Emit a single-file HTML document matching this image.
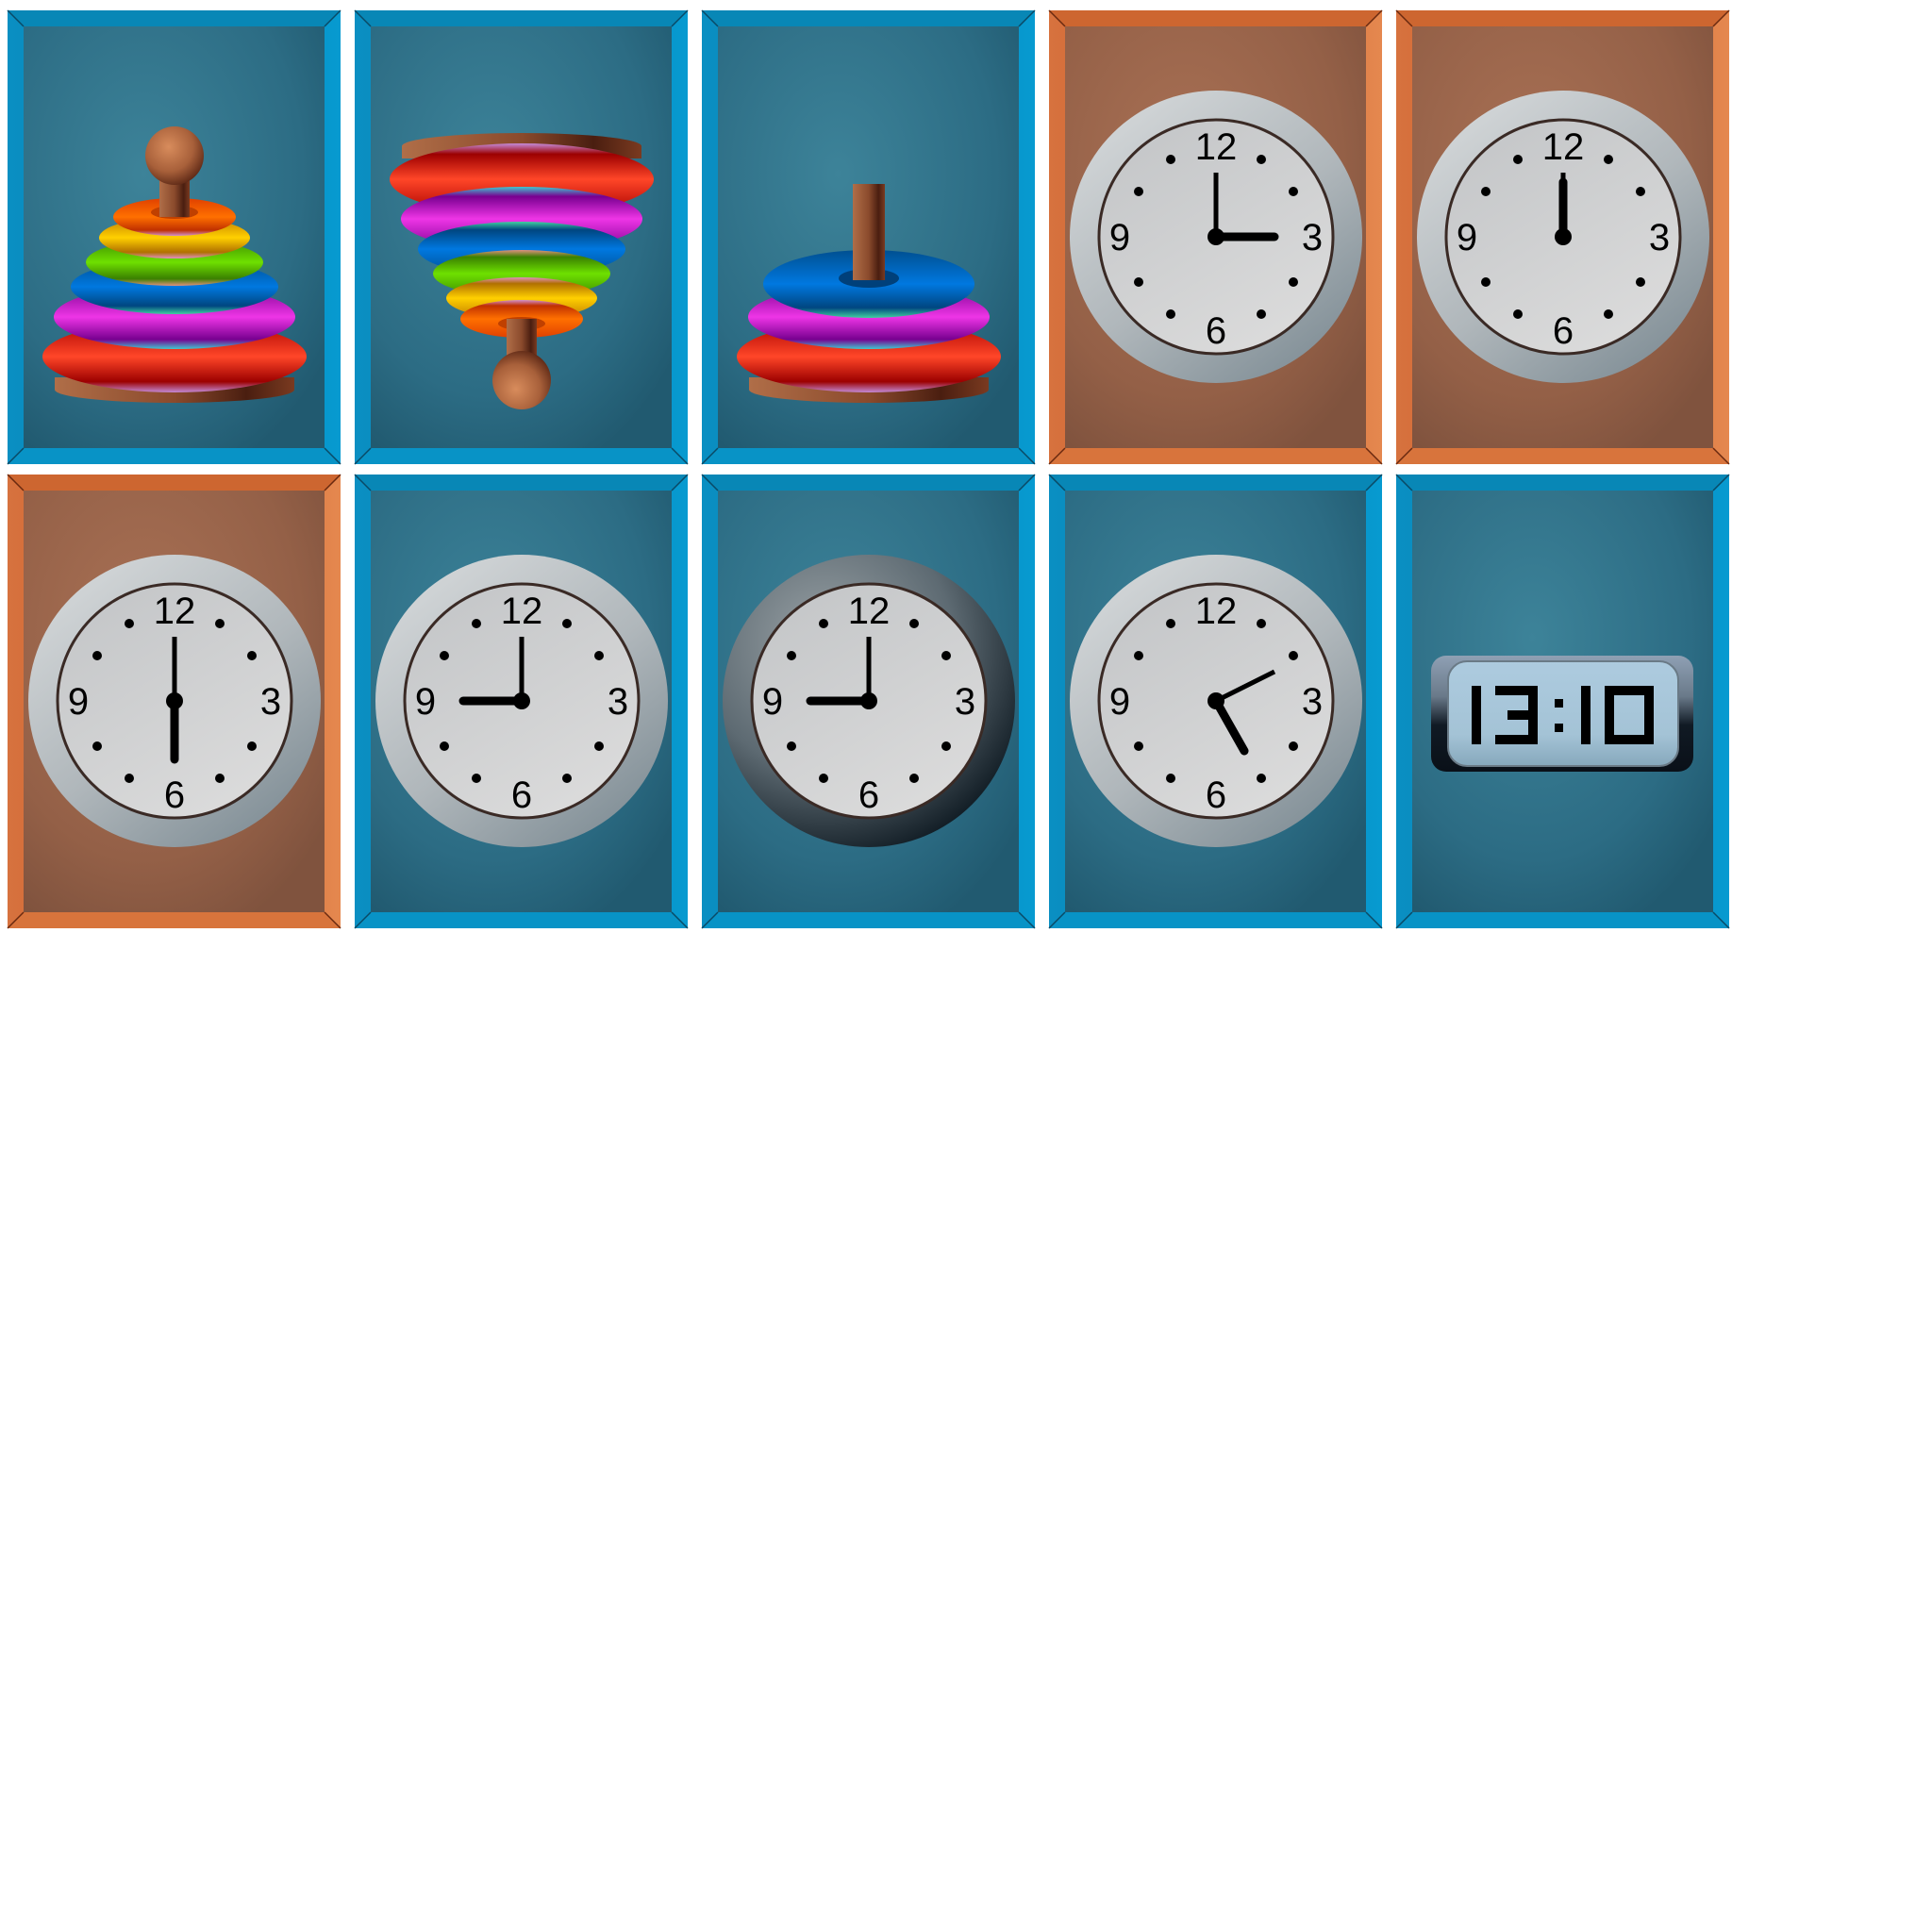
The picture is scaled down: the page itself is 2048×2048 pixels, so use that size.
<!DOCTYPE html>
<html><head><meta charset="utf-8"><style>html,body{margin:0;padding:0;background:#fff;}svg{display:block}</style></head>
<body>
<svg width="2048" height="2048" viewBox="0 0 2048 2048" xmlns="http://www.w3.org/2000/svg">
<defs>
<radialGradient id="bin" cx="0.4" cy="0.35" r="0.75"><stop offset="0" stop-color="#3d8399"/><stop offset="0.7" stop-color="#2c6c84"/><stop offset="1" stop-color="#215a70"/></radialGradient>
<radialGradient id="oin" cx="0.4" cy="0.35" r="0.75"><stop offset="0" stop-color="#a97155"/><stop offset="0.7" stop-color="#946047"/><stop offset="1" stop-color="#80533e"/></radialGradient>
<linearGradient id="bfr" x1="0" y1="0" x2="1" y2="0"><stop offset="0" stop-color="#0a8fc2"/><stop offset="0.5" stop-color="#0a86b6"/><stop offset="1" stop-color="#079ad0"/></linearGradient>
<linearGradient id="ofr" x1="0" y1="0" x2="1" y2="0"><stop offset="0" stop-color="#d7723e"/><stop offset="0.5" stop-color="#c65c2c"/><stop offset="1" stop-color="#e5884f"/></linearGradient>
<linearGradient id="rim" x1="0.2" y1="0.1" x2="0.85" y2="0.95"><stop offset="0" stop-color="#cfd3d5"/><stop offset="0.5" stop-color="#b0b7bb"/><stop offset="1" stop-color="#808e96"/></linearGradient>
<radialGradient id="rimd" cx="0.35" cy="0.3" r="0.8"><stop offset="0" stop-color="#9aa2a6"/><stop offset="0.55" stop-color="#5d6a72"/><stop offset="1" stop-color="#07121a"/></radialGradient>
<linearGradient id="faceg" x1="0.2" y1="0" x2="0.8" y2="1"><stop offset="0" stop-color="#c4c6c8"/><stop offset="1" stop-color="#dcdcdc"/></linearGradient>
<linearGradient id="gr" x1="0" y1="0" x2="0" y2="1"><stop offset="0" stop-color="#a80000"/><stop offset="0.5" stop-color="#ff4628"/><stop offset="0.85" stop-color="#9c0000"/><stop offset="1" stop-color="#c48ad8"/></linearGradient>
<linearGradient id="gp" x1="0" y1="0" x2="0" y2="1"><stop offset="0" stop-color="#7a0090"/><stop offset="0.5" stop-color="#ee35e6"/><stop offset="0.85" stop-color="#780090"/><stop offset="1" stop-color="#40c8d0"/></linearGradient>
<linearGradient id="gb" x1="0" y1="0" x2="0" y2="1"><stop offset="0" stop-color="#004f90"/><stop offset="0.5" stop-color="#0078e0"/><stop offset="0.85" stop-color="#004680"/><stop offset="1" stop-color="#40d0a0"/></linearGradient>
<linearGradient id="gg" x1="0" y1="0" x2="0" y2="1"><stop offset="0" stop-color="#3c8a00"/><stop offset="0.5" stop-color="#6ee000"/><stop offset="0.85" stop-color="#3a8000"/><stop offset="1" stop-color="#e09080"/></linearGradient>
<linearGradient id="gy" x1="0" y1="0" x2="0" y2="1"><stop offset="0" stop-color="#c07a00"/><stop offset="0.5" stop-color="#ffd000"/><stop offset="0.85" stop-color="#b07000"/><stop offset="1" stop-color="#e090c0"/></linearGradient>
<linearGradient id="go" x1="0" y1="0" x2="0" y2="1"><stop offset="0" stop-color="#e04000"/><stop offset="0.5" stop-color="#ff7000"/><stop offset="0.85" stop-color="#c03000"/><stop offset="1" stop-color="#d090d0"/></linearGradient>
<linearGradient id="wood" x1="0" y1="0" x2="1" y2="0"><stop offset="0" stop-color="#b06e48"/><stop offset="0.5" stop-color="#8a4a2c"/><stop offset="0.8" stop-color="#4a1e10"/><stop offset="1" stop-color="#7a3a20"/></linearGradient>
<radialGradient id="ball" cx="0.4" cy="0.35" r="0.7"><stop offset="0" stop-color="#d88c5c"/><stop offset="0.6" stop-color="#a8603a"/><stop offset="1" stop-color="#5a2614"/></radialGradient>
<linearGradient id="dig" x1="0" y1="0" x2="0" y2="1"><stop offset="0" stop-color="#8fa0b4"/><stop offset="0.35" stop-color="#6a7a8a"/><stop offset="0.6" stop-color="#101a24"/><stop offset="1" stop-color="#0a1018"/></linearGradient>
<linearGradient id="scr" x1="0" y1="0" x2="0" y2="1"><stop offset="0" stop-color="#adcbdf"/><stop offset="0.7" stop-color="#a4c3d6"/><stop offset="1" stop-color="#86a8bc"/></linearGradient>

<g id="bframe">
<rect x="0" y="0" width="353" height="481" fill="url(#bfr)"/>
<polygon points="0,0 353,0 336,17 17,17" fill="#0887b6"/>
<polygon points="0,481 353,481 336,464 17,464" fill="#0893c6"/>
<rect x="17" y="17" width="319" height="447" fill="url(#bin)"/>
<path d="M0,0L17,17M353,0L336,17M0,481L17,464M353,481L336,464" stroke="#0a4a66" stroke-width="1.5"/>
</g>
<g id="oframe">
<rect x="0" y="0" width="353" height="481" fill="url(#ofr)"/>
<polygon points="0,0 353,0 336,17 17,17" fill="#cd6630"/>
<polygon points="0,481 353,481 336,464 17,464" fill="#d8743c"/>
<rect x="17" y="17" width="319" height="447" fill="url(#oin)"/>
<path d="M0,0L17,17M353,0L336,17M0,481L17,464M353,481L336,464" stroke="#6a2a10" stroke-width="1.5"/>
</g>
<g id="dial">
<circle r="124" fill="url(#faceg)" stroke="#3a2a25" stroke-width="3"/>
<g font-family="Liberation Sans, sans-serif" font-size="40" text-anchor="middle" fill="#000">
<text x="0" y="-82">12</text><text x="102" y="14">3</text><text x="0" y="113">6</text><text x="-102" y="14">9</text>
</g>
<g fill="#000">
<circle cx="48" cy="-82" r="5"/><circle cx="82" cy="-48" r="5"/><circle cx="82" cy="48" r="5"/><circle cx="48" cy="82" r="5"/>
<circle cx="-48" cy="82" r="5"/><circle cx="-82" cy="48" r="5"/><circle cx="-82" cy="-48" r="5"/><circle cx="-48" cy="-82" r="5"/>
</g>
</g>
<g id="clk"><circle r="155" fill="url(#rim)"/><use href="#dial"/></g>
<g id="clkd"><circle r="155" fill="url(#rimd)"/><use href="#dial"/></g>
<g id="base">
<path d="M50,389 L304,389 L304,402 A127,14 0 0 1 50,402 Z" fill="url(#wood)"/>
</g>
</defs>

<!-- Row 1 -->
<g transform="translate(8,11)"><use href="#bframe"/>
<use href="#base"/>
<ellipse cx="177" cy="367" rx="140" ry="38" fill="url(#gr)"/>
<ellipse cx="177" cy="325" rx="128" ry="34" fill="url(#gp)"/>
<ellipse cx="177" cy="293" rx="110" ry="29" fill="url(#gb)"/>
<ellipse cx="177" cy="267" rx="94" ry="25" fill="url(#gg)"/>
<ellipse cx="177" cy="241" rx="80" ry="22" fill="url(#gy)"/>
<ellipse cx="177" cy="219" rx="65" ry="20" fill="url(#go)"/>
<ellipse cx="177" cy="214" rx="25" ry="7" fill="#c04000"/>
<rect x="161" y="179" width="32" height="40" fill="url(#wood)"/>
<circle cx="177" cy="154" r="31" fill="url(#ball)"/>
</g>
<g transform="translate(376,11)"><use href="#bframe"/>
<g transform="translate(0,546) scale(1,-1)">
<use href="#base"/>
<ellipse cx="177" cy="367" rx="140" ry="38" fill="url(#gr)"/>
<ellipse cx="177" cy="325" rx="128" ry="34" fill="url(#gp)"/>
<ellipse cx="177" cy="293" rx="110" ry="29" fill="url(#gb)"/>
<ellipse cx="177" cy="267" rx="94" ry="25" fill="url(#gg)"/>
<ellipse cx="177" cy="241" rx="80" ry="22" fill="url(#gy)"/>
<ellipse cx="177" cy="219" rx="65" ry="20" fill="url(#go)"/>
<ellipse cx="177" cy="214" rx="25" ry="7" fill="#c04000"/>
<rect x="161" y="179" width="32" height="40" fill="url(#wood)"/>
<circle cx="177" cy="154" r="31" fill="url(#ball)"/>
</g></g>
<g transform="translate(744,11)"><use href="#bframe"/>
<use href="#base"/>
<ellipse cx="177" cy="367" rx="140" ry="38" fill="url(#gr)"/>
<ellipse cx="177" cy="325" rx="128" ry="34" fill="url(#gp)"/>
<ellipse cx="177" cy="290" rx="112" ry="36" fill="url(#gb)"/>
<ellipse cx="177" cy="284" rx="32" ry="10" fill="#00407a"/>
<rect x="160" y="184" width="34" height="102" fill="url(#wood)"/>
</g>
<g transform="translate(1112,11)"><use href="#oframe"/>
<g transform="translate(177,240)"><use href="#clk"/>
<line x1="0" y1="0" x2="0" y2="-68" stroke="#000" stroke-width="5"/>
<line x1="0" y1="0" x2="62" y2="0" stroke="#000" stroke-width="9" stroke-linecap="round"/>
<circle r="9"/></g></g>
<g transform="translate(1480,11)"><use href="#oframe"/>
<g transform="translate(177,240)"><use href="#clk"/>
<line x1="0" y1="0" x2="0" y2="-68" stroke="#000" stroke-width="5"/>
<line x1="0" y1="0" x2="0" y2="-58" stroke="#000" stroke-width="9" stroke-linecap="round"/>
<circle r="9"/></g></g>

<!-- Row 2 -->
<g transform="translate(8,503)"><use href="#oframe"/>
<g transform="translate(177,240)"><use href="#clk"/>
<line x1="0" y1="0" x2="0" y2="-68" stroke="#000" stroke-width="5"/>
<line x1="0" y1="0" x2="0" y2="62" stroke="#000" stroke-width="9" stroke-linecap="round"/>
<circle r="9"/></g></g>
<g transform="translate(376,503)"><use href="#bframe"/>
<g transform="translate(177,240)"><use href="#clk"/>
<line x1="0" y1="0" x2="0" y2="-68" stroke="#000" stroke-width="5"/>
<line x1="0" y1="0" x2="-62" y2="0" stroke="#000" stroke-width="9" stroke-linecap="round"/>
<circle r="9"/></g></g>
<g transform="translate(744,503)"><use href="#bframe"/>
<g transform="translate(177,240)"><use href="#clkd"/>
<line x1="0" y1="0" x2="0" y2="-68" stroke="#000" stroke-width="5"/>
<line x1="0" y1="0" x2="-62" y2="0" stroke="#000" stroke-width="9" stroke-linecap="round"/>
<circle r="9"/></g></g>
<g transform="translate(1112,503)"><use href="#bframe"/>
<g transform="translate(177,240)"><use href="#clk"/>
<line x1="0" y1="0" x2="62" y2="-31" stroke="#000" stroke-width="5"/>
<line x1="0" y1="0" x2="30" y2="53" stroke="#000" stroke-width="9" stroke-linecap="round"/>
<circle r="9"/></g></g>
<g transform="translate(1480,503)"><use href="#bframe"/>
<rect x="37" y="192" width="278" height="123" rx="16" fill="url(#dig)"/>
<rect x="55" y="198" width="244" height="111" rx="20" fill="url(#scr)" stroke="#6a7a86" stroke-width="2"/>
<g fill="#000">
<rect x="80" y="224" width="10" height="62"/>
<rect x="105" y="224" width="45" height="10"/><rect x="140" y="224" width="10" height="62"/><rect x="118" y="250" width="32" height="10"/><rect x="105" y="276" width="45" height="10"/>
<rect x="168" y="238" width="9" height="9"/><rect x="168" y="264" width="9" height="9"/>
<rect x="196" y="224" width="10" height="62"/>
<rect x="221" y="224" width="52" height="10"/><rect x="221" y="276" width="52" height="10"/><rect x="221" y="224" width="10" height="62"/><rect x="263" y="224" width="10" height="62"/>
</g></g>
</svg>
</body></html>
